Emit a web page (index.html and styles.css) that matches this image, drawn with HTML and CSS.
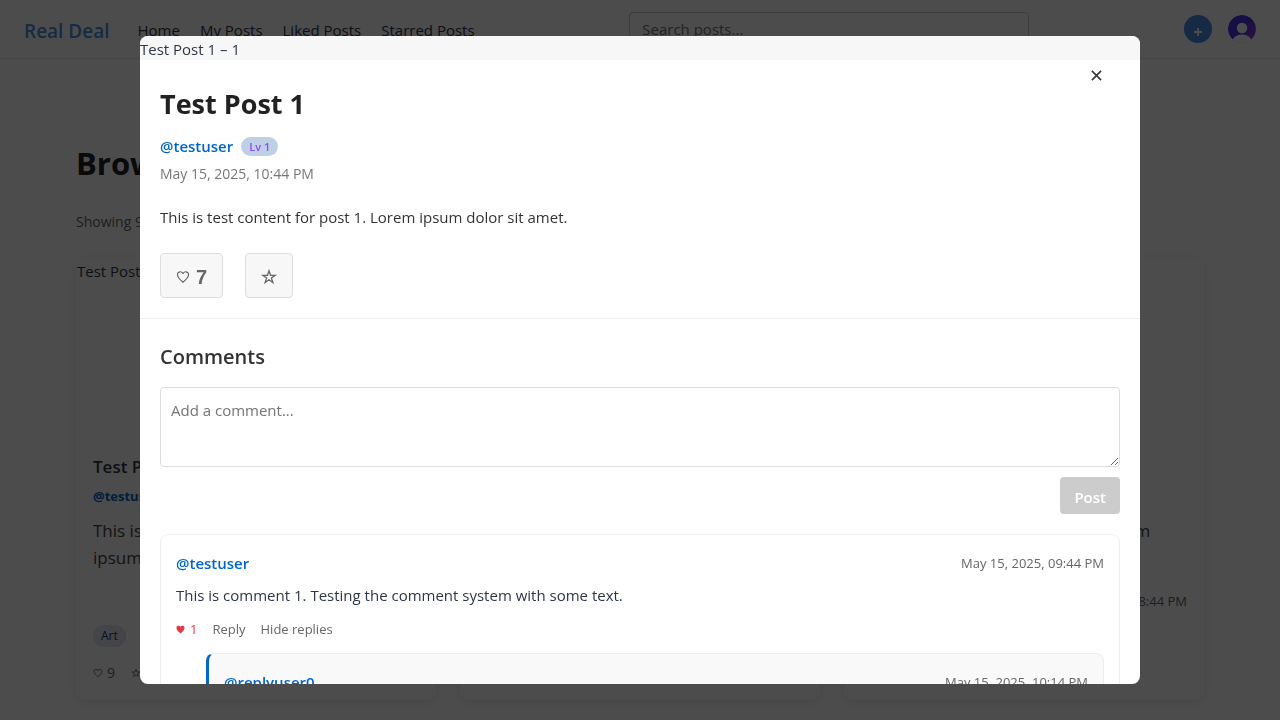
FILE: index.html
```html
<!DOCTYPE html>
<html lang="en">
<head>
<meta charset="utf-8">
<meta name="viewport" content="width=device-width, initial-scale=1">
<title>Real Deal</title>
<link rel="stylesheet" href="styles.css">
</head>
<body>
<header class="topbar">
  <a class="brand" href="#">Real Deal</a>
  <nav class="nav">
    <a href="#">Home</a>
    <a href="#">My Posts</a>
    <a href="#">Liked Posts</a>
    <a href="#">Starred Posts</a>
  </nav>
  <input class="search" type="search" placeholder="Search posts..." aria-label="Search posts">
  <div class="actions">
    <button class="add" type="button" aria-label="New post"><svg viewBox="0 0 28 28" aria-hidden="true"><path d="M14 13v8M10 17h8" stroke="#fff" stroke-width="1.800"/></svg></button>
    <button class="avatar" type="button" aria-label="Account">
      <svg viewBox="0 0 28 28" aria-hidden="true">
        <defs>
          <linearGradient id="g" x1="0" y1="0" x2="1" y2="1"><stop offset="0.400" stop-color="#4433e6"/><stop offset="1" stop-color="#a33bd6"/></linearGradient>
          <clipPath id="c"><circle cx="14" cy="14" r="14"/></clipPath>
        </defs>
        <g clip-path="url(#c)"><circle cx="14" cy="14" r="14" fill="url(#g)"/><circle cx="14" cy="13" r="5.300" fill="#fff"/><ellipse cx="14" cy="27" rx="10" ry="7.500" fill="#fff"/></g>
      </svg>
    </button>
  </div>
</header>

<main class="page">
  <h1 class="page-title">Browse Posts</h1>
  <p class="showing">Showing 9 posts</p>
  <div class="grid">
    <article class="card">
      <div class="card-image">Test Post 1 – 1</div>
      <h2 class="card-title">Test Post 1</h2>
      <a class="card-user" href="#">@testuser</a>
      <p class="card-text">This is test content for post 1. Lorem ipsum dolor sit amet.</p>
      <span class="tag">Art</span>
      <div class="card-foot">
        <span class="stat"><svg class="icon" viewBox="0 0 16 16" aria-hidden="true"><path class="line" d="M8 14C5 11.500 1.700 8.500 1.700 5.500a3.200 3.200 0 0 1 6.300-1 3.200 3.200 0 0 1 6.300 1C14.300 8.500 11 11.500 8 14z"/></svg>9</span>
        <span class="stat"><svg class="icon" viewBox="0 0 16 16" aria-hidden="true"><path class="line" d="M8 1.800l1.500 4.500h4.700l-3.800 2.800 1.500 4.500L8 10.800l-3.900 2.800 1.500-4.500-3.800-2.800h4.700z"/></svg></span>
      </div>
    </article>
    <article class="card"></article>
    <article class="card">
      <div class="card-image"></div>
      <h2 class="card-title"></h2>
      <p class="card-text">This is test content for post 3. Lorem ipsum dolor sit amet.</p>
      <time class="card-time">May 15, 2025, 08:44 PM</time>
    </article>
  </div>
</main>

<div class="overlay">
  <section class="modal" role="dialog" aria-modal="true" aria-labelledby="post-title">
    <div class="modal-image">Test Post 1 – 1</div>
    <button class="close" type="button" aria-label="Close"><svg viewBox="0 0 12 12" aria-hidden="true"><path d="M1 1l10 10M11 1L1 11"/></svg></button>
    <div class="post">
      <h2 class="post-title" id="post-title">Test Post 1</h2>
      <div class="byline"><a class="user" href="#">@testuser</a><span class="level">Lv 1</span></div>
      <time class="post-time">May 15, 2025, 10:44 PM</time>
      <p class="post-text">This is test content for post 1. Lorem ipsum dolor sit amet.</p>
      <div class="reactions">
        <button class="react" type="button" aria-label="Like, 7"><svg class="icon big" viewBox="0 0 16 16" aria-hidden="true"><path class="line" d="M8 14C5 11.500 1.700 8.500 1.700 5.500a3.200 3.200 0 0 1 6.300-1 3.200 3.200 0 0 1 6.300 1C14.300 8.500 11 11.500 8 14z"/></svg>7</button>
        <button class="react" type="button" aria-label="Star"><svg class="icon star" viewBox="0 0 16 16" aria-hidden="true"><path class="line" d="M8 1.800l1.500 4.500h4.700l-3.800 2.800 1.500 4.500L8 10.800l-3.900 2.800 1.500-4.500-3.800-2.800h4.700z"/></svg></button>
      </div>
    </div>
    <div class="comments">
      <h3 class="comments-title">Comments</h3>
      <form class="comment-form">
        <textarea class="comment-box" placeholder="Add a comment..." aria-label="Add a comment"></textarea>
        <button class="submit" type="submit" disabled>Post</button>
      </form>
      <article class="comment">
        <div class="comment-head"><a class="user" href="#">@testuser</a><time class="comment-time">May 15, 2025, 09:44 PM</time></div>
        <p class="comment-text">This is comment 1. Testing the comment system with some text.</p>
        <div class="comment-actions">
          <button class="link liked" type="button"><svg class="small" viewBox="0 0 16 16" aria-hidden="true"><path fill="currentColor" d="M8 15C5 12.500.8 9 .8 5.500A3.900 3.900 0 0 1 8 3.200a3.900 3.900 0 0 1 7.200 2.300C15.200 9 11 12.500 8 15z"/></svg>1</button>
          <button class="link" type="button">Reply</button>
          <button class="link" type="button">Hide replies</button>
        </div>
        <article class="comment reply">
          <div class="comment-head"><a class="user" href="#">@replyuser0</a><time class="comment-time">May 15, 2025, 10:14 PM</time></div>
        </article>
      </article>
    </div>
  </section>
</div>
</body>
</html>
```
FILE: styles.css
```css
* { box-sizing: border-box; }
body {
  margin: 0;
  height: 100vh;
  overflow: hidden;
  background: #fff;
  color: #2d3748;
  font-family: "Open Sans", "Noto Sans", sans-serif;
  font-size: 15px;
  line-height: 24px;
}
h1, h2, h3, p { margin: 0; }
a { color: inherit; text-decoration: none; }
button, input, textarea { font: inherit; color: inherit; }
button { padding: 0; border: 0; background: none; }

.topbar {
  display: flex;
  align-items: center;
  height: 59px;
  padding: 0 24px;
  border-bottom: 1px solid #e2e8f0;
}
.brand { padding-top: 3px; color: #4a90e2; font-size: 19px; font-weight: 600; }
.nav { display: flex; gap: 20px; margin-left: 28px; padding-top: 2px; }
.search {
  width: 400px;
  height: 34px;
  margin: 0 auto;
  padding: 0 12px;
  border: 1px solid #ccc;
  border-radius: 4px;
  background: transparent;
}
.search::placeholder, .comment-box::placeholder { color: #757575; opacity: 1; }
.actions { display: flex; gap: 16px; }
.add, .avatar { width: 28px; height: 28px; border-radius: 50%; }
.add { background: #4a90e2; }
.add svg, .avatar svg { display: block; width: 28px; height: 28px; }

.page { padding: 80px 76px 0; }
.page-title { color: #222; font-size: 31px; font-weight: 700; line-height: 48px; }
.showing { margin-top: 23px; color: #666; font-size: 14px; }
.grid { display: grid; grid-template-columns: repeat(3, 1fr); gap: 24px; margin-top: 24px; }
.card {
  height: 442px;
  padding: 0 16px;
  border: 1px solid #fafafa;
  border-radius: 8px;
  box-shadow: 0 2px 10px rgba(0, 0, 0, 0.1);
}
.card-image { height: 196px; margin: 0 -16px; }
.card-title { min-height: 24px; font-size: 17px; font-weight: 600; }
.card-user { display: block; margin-top: 5px; color: #0066cc; font-size: 13px; font-weight: 700; }
.card-text { height: 105px; margin-top: 9px; color: #444; font-size: 17px; line-height: 27px; }
.card-title + .card-text { margin-top: 38px; }
.tag {
  display: inline-block;
  padding: 0 8px;
  border-radius: 12px;
  background: #e2e8f0;
  font-size: 12px;
  line-height: 22px;
}
.card-foot { display: flex; gap: 16px; margin-top: 14px; color: #666; font-size: 14px; }
.card-time { display: block; margin-top: -33px; color: #666; font-size: 13px; text-align: right; }
.stat { display: flex; align-items: center; gap: 4px; }
.icon { width: 10px; height: 10px; overflow: visible; }
.line { fill: none; stroke: currentColor; stroke-width: 1.300; }
.big { width: 14px; height: 14px; }
.star { width: 16px; height: 16px; }

.overlay {
  position: fixed;
  inset: 0;
  display: flex;
  align-items: center;
  justify-content: center;
  background: rgba(0, 0, 0, 0.7);
}
.modal {
  position: relative;
  width: 100%;
  max-width: 1000px;
  height: 90vh;
  overflow: hidden;
  border-radius: 8px;
  background: #fff;
}
.modal-image { height: 24px; padding-top: 1px; background: #f7f7f7; }
.close { position: absolute; top: 30px; right: 34px; padding: 4px; color: #333; }
.close svg { display: block; width: 11px; height: 11px; }
.close path { stroke: currentColor; stroke-width: 1.700; }

.post { padding: 20px; border-bottom: 1px solid #eee; }
.post-title { color: #222; font-size: 27px; font-weight: 700; line-height: 48px; }
.byline { display: flex; align-items: center; gap: 8px; margin-top: 6px; }
.user { color: #0066cc; font-size: 15px; font-weight: 600; }
.level {
  padding: 0 8px;
  border-radius: 10px;
  background: #bfd0e6;
  color: #8a50e8;
  font-size: 11px;
  font-weight: 600;
  line-height: 19px;
}
.post-time { display: block; margin-top: 4px; color: #777; font-size: 14px; }
.post-text { margin-top: 19px; color: #333; }
.reactions { display: flex; gap: 22px; margin-top: 24px; }
.react {
  display: flex;
  align-items: center;
  gap: 6px;
  height: 45px;
  padding: 3px 15px 0;
  border: 1px solid #ddd;
  border-radius: 4px;
  background: #f7f7f7;
  color: #666;
  font-family: "Liberation Sans", Arial, sans-serif;
  font-size: 20px;
  font-weight: 700;
}
.comments { padding: 20px; }
.comments-title { color: #333; font-size: 20px; font-weight: 600; line-height: 36px; }
.comment-form { display: flex; flex-direction: column; align-items: flex-end; gap: 10px; margin-top: 12px; }
.comment-box {
  width: 100%;
  height: 80px;
  padding: 10px;
  border: 1px solid #ddd;
  border-radius: 4px;
  background: #fff;
  resize: vertical;
}
.submit { height: 37px; padding: 2px 14px 0; border-radius: 4px; background: #ccc; color: #fff; font-weight: 600; }
.comment { margin-top: 20px; padding: 16px 15px; border: 1px solid #eee; border-radius: 8px; }
.comment-head { display: flex; justify-content: space-between; }
.comment-time { color: #666; font-size: 13px; }
.comment-text { margin-top: 8px; }
.comment-actions { display: flex; gap: 15px; margin-top: 10px; }
.link { display: flex; align-items: center; gap: 5px; color: #666; font-size: 13px; }
.liked { color: #e63946; }
.small { width: 9px; height: 9px; }
.reply { margin: 12px 0 0 30px; border-left: 3px solid #0066cc; background: #f9f9f9; }
```
